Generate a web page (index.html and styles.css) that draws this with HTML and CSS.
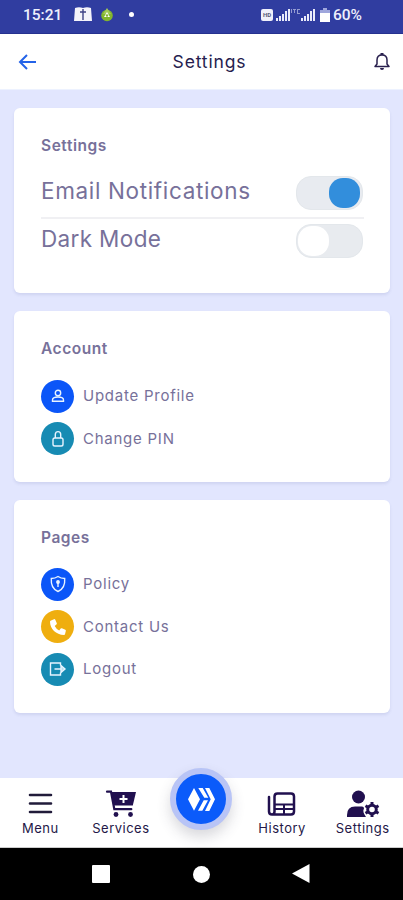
FILE: index.html
```html
<!DOCTYPE html>
<html lang="en">
<head>
<meta charset="utf-8">
<title>Settings</title>
<link rel="stylesheet" href="styles.css">
</head>
<body>
<div class="status">
  <span class="clock">15:21</span>
  <svg class="st-book" width="18" height="15" viewBox="0 0 18 15"><path fill="#f4f3fa" d="M1 1q4-1.500 8 0 4-1.500 8 0l1 13H0z"/><path stroke="#3e4285" stroke-width="1.400" d="M9 2v11M6 5h6" fill="none"/></svg>
  <svg class="st-green" width="14" height="14" viewBox="0 0 14 14"><circle cx="7" cy="7.500" r="5.800" fill="#83b62d"/><path d="M7 0l4 6H3z" fill="#a2c957"/><path d="M7 4l3 5H4z" fill="#fff"/><circle cx="7" cy="7.500" r="1.200" fill="#83b62d"/></svg>
  <span class="st-dot"></span>
  <span class="hd">HD</span>
  <svg class="st-signal" width="39" height="13" viewBox="0 0 39 13" fill="#e9ebfa"><path d="M0 10h2v3H0zM3 8h2v5H3zM6 6h2v7H6zM9 3h2v10H9zM12 1h2v12h-2zM25 10h2v3h-2zM28 8h2v5h-2zM31 6h2v7h-2zM34 3h2v10h-2zM37 1h2v12h-2z"/><path opacity=".55" d="M15 1h1v4h-1zM17 1h3v1h-1v3h-1V2h-1zM21 1h3v1h-2v3h2v1h-3z"/></svg>
  <svg class="st-battery" width="10" height="14" viewBox="0 0 10 14"><path fill="#9fa6dc" d="M3 0h4v2h3v4H0V2h3z"/><path fill="#fff" d="M0 5h10v9H0z"/></svg>
  <span class="percent">60%</span>
</div>
<header class="header">
  <svg class="back" width="20" height="18" viewBox="0 0 20 18"><path d="M9 2L2 9l7 7M2 9h16" fill="none" stroke="#2463e8" stroke-width="2"/></svg>
  <h1>Settings</h1>
  <svg class="bell" width="18" height="20" viewBox="0 0 18 20"><path d="M2 14.500h14l-2-2.500V8c0-3-2-5-5-5S4 5 4 8v4z" fill="none" stroke="#29204e" stroke-width="1.500" stroke-linejoin="round"/><path d="M7.500 1h3v2h-3zM7 16h4q0 2-2 2t-2-2z" fill="#29204e"/></svg>
</header>
<main>
  <section class="card card-settings">
    <h2>Settings</h2>
    <div class="row row-line"><span class="t-email">Email Notifications</span><span class="switch on"></span></div>
    <div class="row"><span class="t-dark">Dark Mode</span><span class="switch"></span></div>
  </section>
  <section class="card card-account">
    <h2>Account</h2>
    <div class="item"><span class="ico blue"><svg width="18" height="18" viewBox="0 0 18 18"><circle cx="9" cy="6" r="2.700"/><path d="M3.500 14.200v-1.200c0-2.200 2.800-3 5.500-3s5.500.8 5.500 3v1.200z"/></svg></span><span>Update Profile</span></div>
    <div class="item"><span class="ico teal"><svg width="18" height="18" viewBox="0 0 18 18"><rect x="4" y="8" width="10" height="8" rx="1.800"/><path d="M6.300 8V4.500c0-3.800 5.400-3.800 5.400 0V8"/></svg></span><span>Change PIN</span></div>
  </section>
  <section class="card card-pages">
    <h2>Pages</h2>
    <div class="item"><span class="ico blue"><svg width="18" height="18" viewBox="0 0 18 18"><path d="M9 1.500q3 2 6.700 2c.5 6.500-2 11-6.700 13C4.300 14.500 1.800 10 2.300 3.500Q6 3.500 9 1.500z"/><circle cx="9" cy="7" r="1.200" fill="#fff"/><path d="M9 8v4"/></svg></span><span>Policy</span></div>
    <div class="item"><span class="ico amber"><svg width="18" height="18" viewBox="0 0 18 18"><path class="solid" d="M1.500 2.700L5 1.200q.9-.3 1.300.5l1.500 3.500q.2.700-.4 1.200L5.700 7.900q1.500 3 4.500 4.500l1.500-1.800q.5-.6 1.200-.3l3.400 1.500q.8.400.5 1.300l-.8 3.200q-.2.700-1 .7C7 17 1 11 1 3.600q0-.6.500-.9z"/></svg></span><span>Contact Us</span></div>
    <div class="item"><span class="ico teal"><svg width="18" height="18" viewBox="0 0 18 18"><path d="M11.500 5.500V3h-10v12h10v-2.500M5.500 9H13"/><path d="M12 5.500L16 9l-4 3.500z" fill="#b9e0ee"/></svg></span><span>Logout</span></div>
  </section>
</main>
<nav class="tabs">
  <div class="tab"><svg width="32" height="28" viewBox="0 0 32 28"><path d="M6 5h21M6 13.500h21M6 22h21" fill="none" stroke="#211b3a" stroke-width="2.600" stroke-linecap="round"/></svg><span>Menu</span></div>
  <div class="tab"><svg width="32" height="28" viewBox="0 0 32 28"><path d="M2 1.700h4l3.300 17.500h17" fill="none" stroke="#21104f" stroke-width="2.200" stroke-linecap="round"/><path fill="#21104f" d="M6 2h25l-3.200 13.500H8.800z"/><path d="M18.500 5v8M14.500 9h8" stroke="#fff" stroke-width="2"/><circle cx="11" cy="24.500" r="2.400" fill="#21104f"/><circle cx="25.500" cy="24.500" r="2.400" fill="#21104f"/></svg><span>Services</span></div>
  <div class="tab center"><span class="fab"><svg width="30" height="28" viewBox="0 0 30 28" fill="#fff"><path d="M8 3l6 11.300-6 11.400-6-11.400zM12.300 3h4.400l5.600 9.700h-4zM17.700 15.300H22l-5.700 10.400H12zM19 3h4.300L29 14.300 23.300 26H19l5.700-11.700z"/></svg></span></div>
  <div class="tab"><svg width="32" height="28" viewBox="0 0 32 28"><path d="M8.500 6.500q0-3 3-3h13.500q3 0 3 3v15q0 3-3 3H6q-3 0-3-3V7M8.500 6.500v15q0 3-2.500 3" fill="none" stroke="#21104f" stroke-width="2.500" stroke-linecap="round"/><path d="M8.500 14.500H28M8.500 19H28M18 14.500v10" fill="none" stroke="#21104f" stroke-width="2"/></svg><span>History</span></div>
  <div class="tab"><svg width="34" height="28" viewBox="0 0 34 28"><g fill="#21104f"><circle cx="12.500" cy="7" r="6.500"/><path d="M1 27V25q0-8.500 8-8.500h7q2 0 2 2-2 3 2 8.500z"/></g><circle cx="26" cy="19.500" r="4.300" fill="none" stroke="#21104f" stroke-width="3"/><path d="M26 12v3M26 24v3M19.500 15.700l2.600 1.500M29.900 21.700l2.600 1.500M19.500 23.300l2.600-1.500M29.900 17.300l2.600-1.500" stroke="#21104f" stroke-width="3"/></svg><span class="t-nav-settings">Settings</span></div>
</nav>
<footer class="system"><span class="sq"></span><span class="ci"></span><svg width="18" height="20" viewBox="0 0 18 20"><path d="M17.500 0v19L0 9.500z" fill="#fff"/></svg></footer>
</body>
</html>
```
FILE: styles.css
```css
* { box-sizing: border-box; }
body { margin: 0; width: 403px; height: 900px; overflow: hidden; display: flex; flex-direction: column; background: #e2e6fe; font-family: Inter, sans-serif; color: #77719a; }
h1, h2 { margin: 0; }
svg { display: block; flex: none; }
span { white-space: nowrap; }
.status { height: 34px; flex: none; background: #303da0; border-bottom: 1px solid #26318f; display: flex; align-items: center; padding: 0 0 4px 23px; color: #eef0fc; font: 500 15.500px/18px Roboto, sans-serif; }
.clock { width: 51px; }
.st-green { margin-left: 8px; }
.st-dot { width: 5px; height: 5px; border-radius: 50%; background: #fff; margin-left: 15px; }
.hd { width: 12px; height: 12px; margin-left: 127px; border-radius: 2px; background: #f0f0fa; color: #5a5a78; font: 700 6px/12px Roboto, sans-serif; text-align: center; }
.st-signal { margin-left: 3px; }
.st-battery { margin-left: 5px; }
.percent { margin-left: 3px; letter-spacing: -.1px; }
.header { height: 56px; flex: none; background: #fff; border-bottom: 1px solid #edf2ff; display: flex; align-items: center; justify-content: space-between; padding: 0 12px 0 18px; }
h1 { font-size: 17.500px; font-weight: 400; color: #271d4f; letter-spacing: .85px; margin-left: 8px; }
main { flex: 1; padding: 18px 13px 0 14px; display: flex; flex-direction: column; gap: 18px; }
.card { background: #fff; border-radius: 6px; padding: 27px 26px 0 27px; box-shadow: 0 2px 3px rgba(70, 80, 150, .12); flex: none; }
.card-settings { height: 185px; }
.card-account { height: 171px; }
.card-pages { height: 213px; }
h2 { font-size: 15.500px; line-height: 22px; font-weight: 600; letter-spacing: .55px; }
.row { height: 48px; font-size: 22.500px; display: flex; justify-content: space-between; padding-top: 5px; }
.row-line { height: 62px; padding-top: 19px; border-bottom: 2px solid #f0f0f3; }
.row > span:first-child { line-height: 30px; }
.t-email { letter-spacing: .65px; }
.t-dark { letter-spacing: .35px; }
.switch { width: 67px; height: 34px; margin-right: 1px; border-radius: 15px; background: #e8ebef; padding: 1px; border: 1px solid #e3e7eb; display: flex; }
.switch::before { content: ""; width: 31px; height: 30px; border-radius: 14px; background: #fff; }
.switch.on { background: #e8ebf0; padding: 1px 2px; }
.switch.on::before { margin-left: auto; background: #328edc; }
.item { display: flex; align-items: center; gap: 9px; height: 34px; margin-bottom: 8.500px; font-size: 15px; letter-spacing: .75px; }
.item > span:last-child { margin-top: -1px; }
h2 + .item { margin-top: 19px; }
.card-pages h2 + .item { margin-top: 18px; }
.ico { width: 33px; height: 33px; border-radius: 50%; display: flex; align-items: center; justify-content: center; }
.ico svg { fill: none; stroke: #e8f4ff; stroke-width: 1.400; }
.ico .solid { fill: #fff; stroke: none; }
.blue { background: #0b56f8; }
.teal { background: #178bb3; }
.amber { background: #efae0f; }
.tabs { height: 70px; flex: none; background: #fff; border-bottom: 1px solid #ccc; display: grid; grid-template-columns: repeat(5, 80.600px); }
.tab { display: flex; flex-direction: column; align-items: center; padding-top: 12px; color: #241747; font-size: 13px; line-height: 20px; letter-spacing: .5px; }
.center { padding: 0; margin-top: -10px; }
.fab { width: 62px; height: 62px; flex: none; border: 6px solid #b8c4f6; border-radius: 50%; background: #0b5bfa; display: flex; align-items: center; justify-content: center; box-shadow: 0 7px 14px rgba(60, 60, 80, .2); }
.system { height: 52px; flex: none; background: #000; display: flex; align-items: center; padding-left: 92px; }
.sq { width: 18px; height: 18px; background: #fff; border-radius: 1px; }
.ci { width: 17px; height: 17px; border-radius: 50%; background: #fff; margin: 0 82px 0 83px; }
```
